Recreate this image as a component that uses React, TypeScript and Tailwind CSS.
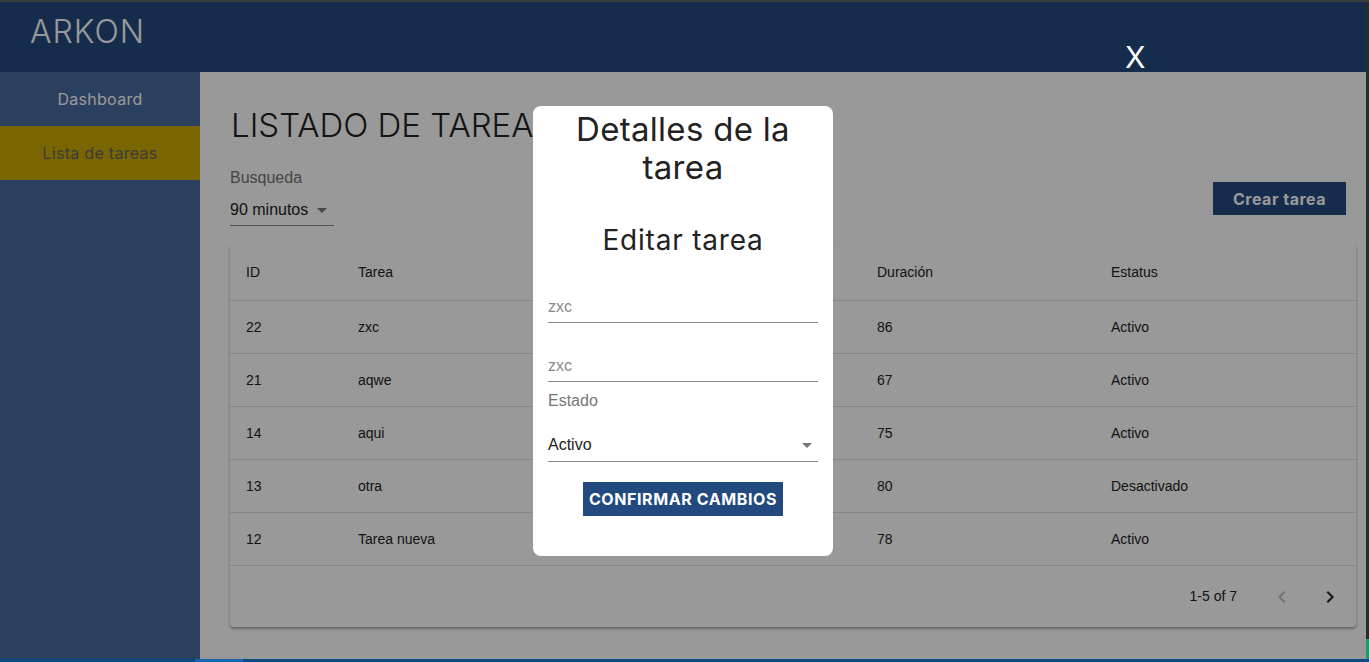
import React from "react";

const rows = [
  { id: 22, tarea: "zxc", duracion: 86, estatus: "Activo" },
  { id: 21, tarea: "aqwe", duracion: 67, estatus: "Activo" },
  { id: 14, tarea: "aqui", duracion: 75, estatus: "Activo" },
  { id: 13, tarea: "otra", duracion: 80, estatus: "Desactivado" },
  { id: 12, tarea: "Tarea nueva", duracion: 78, estatus: "Activo" },
];

const heading = { fontFamily: "Inter, 'Noto Sans', sans-serif" };
const body = { fontFamily: "'Liberation Sans', Arial, sans-serif" };

function ArrowDropDown({ className }: { className?: string }) {
  return (
    <svg viewBox="0 0 24 24" className={className} fill="currentColor">
      <path d="M7 10l5 5 5-5z" />
    </svg>
  );
}

function Chevron({ dir, className }: { dir: "left" | "right"; className?: string }) {
  return (
    <svg viewBox="0 0 24 24" className={className} fill="currentColor">
      {dir === "left" ? (
        <path d="M15.41 7.41L14 6l-6 6 6 6 1.41-1.41L10.83 12z" />
      ) : (
        <path d="M10 6L8.59 7.41 13.17 12l-4.58 4.59L10 18l6-6z" />
      )}
    </svg>
  );
}

export default function App() {
  const cols = "grid grid-cols-[112px_519px_234px_1fr] pl-4";

  return (
    <div className="flex h-[662px] w-[1369px] flex-col overflow-hidden bg-[#2b2b2b]">
      <div className="h-[2px] bg-[#3c3c3c]" />

      <div className="flex min-h-0 flex-1">
        {/* App */}
        <div className="relative flex w-[1366px] flex-col bg-white">
          <header className="flex h-[70px] shrink-0 items-center bg-[#234a7f] pb-[10px] pl-[30px]">
            <span className="text-[32px] font-light tracking-[1px] text-white" style={heading}>
              ARKON
            </span>
          </header>

          <div className="flex min-h-0 flex-1">
            {/* Sidebar */}
            <aside className="w-[200px] shrink-0 bg-[#49699e] tracking-[0.3px]" style={heading}>
              <div className="flex h-[54px] items-center justify-center text-[16px] text-white">Dashboard</div>
              <div className="flex h-[54px] items-center justify-center bg-[#cbaa00] text-[16px] text-[#646464]">
                Lista de tareas
              </div>
            </aside>

            {/* Main */}
            <main className="flex-1 pl-[30px] pr-[10px] pt-[33px]">
              <h1 className="pl-px text-[33px] font-light leading-[40px] text-[#222]" style={heading}>
                LISTADO DE TAREAS
              </h1>

              <div className="mt-[22px] flex items-end justify-between">
                <div style={body}>
                  <div className="text-[16px] leading-[22px] text-[#757575]">Busqueda</div>
                  <div className="mt-[8px] flex h-[29px] w-[104px] items-center justify-between border-b border-[#8a8a8a] pb-[2px]">
                    <span className="text-[16px] text-[#222]">90 minutos</span>
                    <ArrowDropDown className="h-6 w-6 text-[#757575]" />
                  </div>
                </div>
                <button
                  className="mb-[11px] mr-[10px] h-[33px] w-[133px] bg-[#234a7f] text-[16px] font-bold tracking-[0.5px] text-white"
                  style={heading}
                >
                  Crear tarea
                </button>
              </div>

              {/* Table */}
              <div className="mt-[18px] rounded-[4px] bg-white shadow-[0_2px_3px_rgba(0,0,0,0.35)]" style={body}>
                <div className={`${cols} h-[57px] items-center border-b border-[#e0e0e0] text-[14px] text-[#222]`}>
                  <span>ID</span>
                  <span>Tarea</span>
                  <span>Duración</span>
                  <span>Estatus</span>
                </div>
                {rows.map((r) => (
                  <div
                    key={r.id}
                    className={`${cols} h-[53px] items-center border-b border-[#e0e0e0] text-[14px] text-[#222]`}
                  >
                    <span>{r.id}</span>
                    <span>{r.tarea}</span>
                    <span>{r.duracion}</span>
                    <span>{r.estatus}</span>
                  </div>
                ))}
                <div className="flex h-[61px] items-center justify-end pr-[2px] text-[14px] text-[#222]">
                  <span className="mr-[21px]">1-5 of 7</span>
                  <div className="flex h-12 w-12 items-center justify-center text-[#bdbdbd]">
                    <Chevron dir="left" className="h-6 w-6" />
                  </div>
                  <div className="flex h-12 w-12 items-center justify-center text-[#222]">
                    <Chevron dir="right" className="h-6 w-6" />
                  </div>
                </div>
              </div>
            </main>
          </div>

          {/* Overlay */}
          <div className="absolute inset-0 flex items-center justify-center bg-black/40">
            <span className="absolute left-[1125px] top-[33px] text-[30px] text-white" style={heading}>
              X
            </span>

            <div className="w-[300px] rounded-[8px] bg-white px-[15px] pb-[40px] pt-[4px]">
              <h2 className="text-center text-[33px] leading-[38px] tracking-[0.3px] text-[#222]" style={heading}>
                Detalles de la tarea
              </h2>
              <h3
                className="mt-[37px] text-center text-[28px] leading-[34px] tracking-[0.8px] text-[#222]"
                style={heading}
              >
                Editar tarea
              </h3>

              <div style={body}>
                <div className="mt-[34px] flex h-[32px] items-end border-b border-[#8a8a8a] pb-[3px]">
                  <span className="text-[16px] text-[#8a8a8a]">zxc</span>
                </div>
                <div className="mt-[27px] flex h-[32px] items-end border-b border-[#8a8a8a] pb-[3px]">
                  <span className="text-[16px] text-[#8a8a8a]">zxc</span>
                </div>
                <div className="mt-[9px] text-[16px] leading-[20px] text-[#757575]">Estado</div>
                <div className="mt-[17px] flex h-[34px] items-center justify-between border-b border-[#8a8a8a] pt-[2px]">
                  <span className="text-[16px] text-[#222]">Activo</span>
                  <ArrowDropDown className="-mr-[1px] h-6 w-6 text-[#757575]" />
                </div>
              </div>

              <div className="mt-[20px] flex justify-center">
                <button
                  className="h-[34px] w-[200px] bg-[#234a7f] text-[16px] font-bold tracking-[0.6px] text-white"
                  style={heading}
                >
                  CONFIRMAR CAMBIOS
                </button>
              </div>
            </div>
          </div>
        </div>

        {/* window edge */}
        <div className="flex w-[3px] flex-col justify-end bg-[#2b2b2b]">
          <div className="h-[20px] bg-[#1f9a6e]" />
        </div>
      </div>

      <div className="flex h-[3px] bg-[#0b4a85]">
        <div className="ml-[195px] w-[48px] bg-[#1565b0]" />
      </div>
    </div>
  );
}
